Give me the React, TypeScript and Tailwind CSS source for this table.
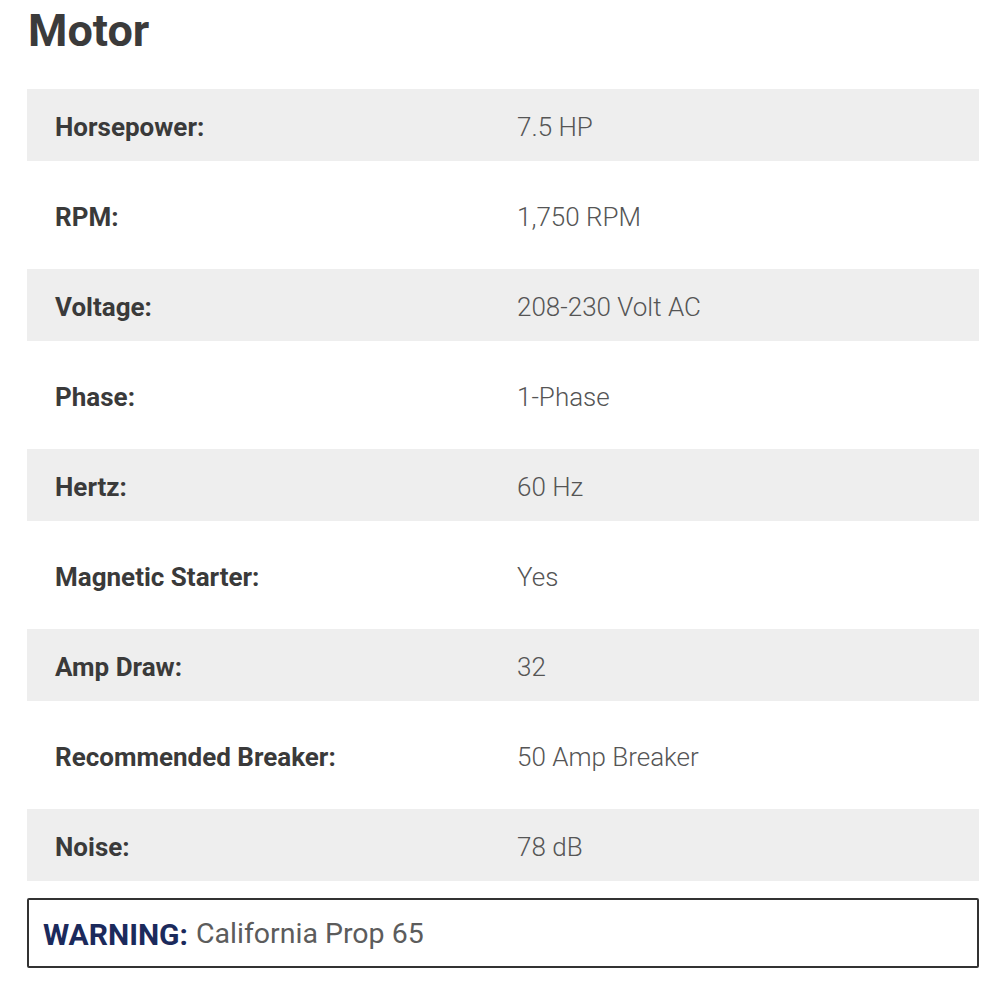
const specs = [
  { label: "Horsepower:", value: "7.5 HP" },
  { label: "RPM:", value: "1,750 RPM" },
  { label: "Voltage:", value: "208-230 Volt AC" },
  { label: "Phase:", value: "1-Phase" },
  { label: "Hertz:", value: "60 Hz" },
  { label: "Magnetic Starter:", value: "Yes" },
  { label: "Amp Draw:", value: "32" },
  { label: "Recommended Breaker:", value: "50 Amp Breaker" },
  { label: "Noise:", value: "78 dB" },
];

export default function App() {
  return (
    <div className="w-[1000px] h-[1000px] bg-white pl-[27px] pr-[21px] font-['Roboto',sans-serif]">
      <h2 className="h-[80px] pt-[4px] pl-[1px] text-[45px] leading-[54px] font-bold text-[#3b3b3b]">Motor</h2>

      {/* spec rows */}
      <div className="flex flex-col">
        {specs.map((s, i) => (
          <div key={s.label} className="h-[90px] py-[9px]">
            <div
              className={
                "h-full grid grid-cols-[490px_1fr] items-center pt-[4px] " +
                (i % 2 === 0 ? "bg-[#eeeeee]" : "bg-white")
              }
            >
              <span className="pl-[28px] text-[26px] font-bold text-[#3a3a3a]">{s.label}</span>
              <span className="text-[26px] font-light text-[#555555]">{s.value}</span>
            </div>
          </div>
        ))}
      </div>

      <div className="mt-[8px] h-[70px] border-2 border-[#333333] rounded-[2px] flex items-center pl-[14px] pt-[2px]">
        <span className="text-[30px] font-bold text-[#1b2a5c]">WARNING:</span>
        <span className="ml-[8px] text-[28.5px] text-[#5c5c5c]">California Prop 65</span>
      </div>
    </div>
  );
}
